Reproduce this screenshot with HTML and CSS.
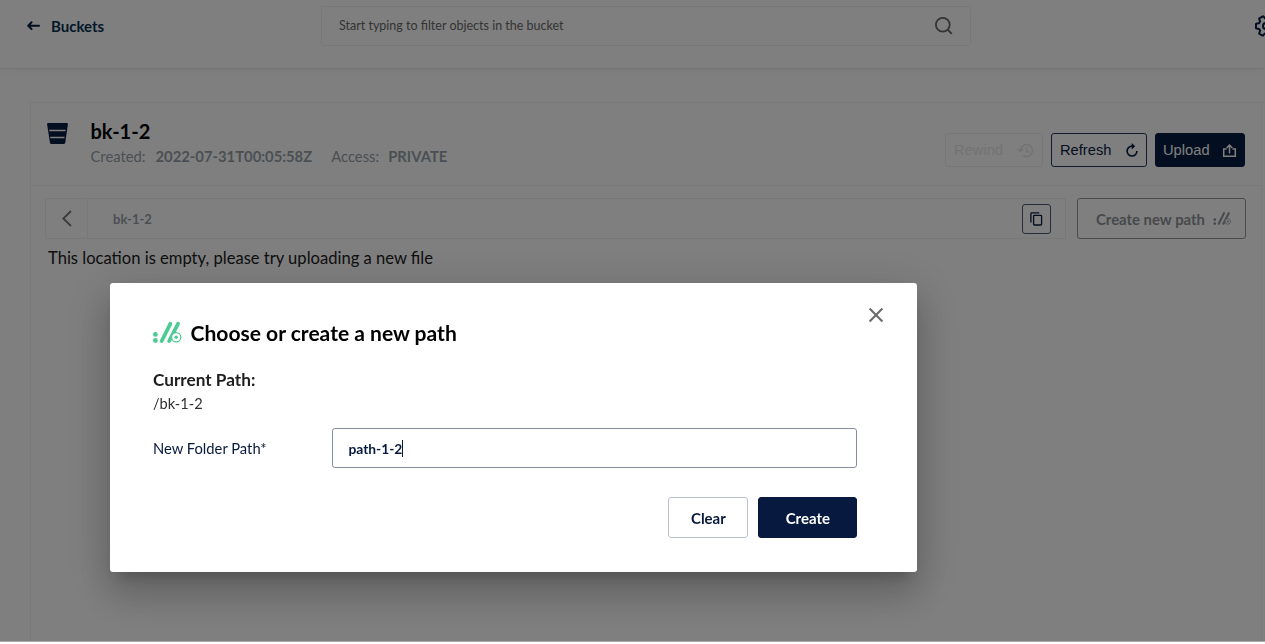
FILE: index.html
```html
<!DOCTYPE html>
<html lang="en">
<head>
<meta charset="utf-8">
<title>Buckets</title>
<link rel="stylesheet" href="styles.css">
</head>
<body>
<div class="app">
  <header class="topbar">
    <a class="back">
      <svg class="back-icon" viewBox="0 0 14 10"><path d="M4.600 1.300 1.200 4.700 4.600 8.100M1.600 4.700H12" fill="none" stroke="currentColor" stroke-width="2" stroke-linecap="round" stroke-linejoin="round"/></svg>
      <span class="back-label">Buckets</span>
    </a>
    <div class="search">
      <span class="search-text">Start typing to filter objects in the bucket</span>
      <svg class="search-icon" viewBox="0 0 18 18"><circle cx="7.8" cy="7.8" r="6.9" fill="none" stroke="currentColor" stroke-width="1.8"/><path d="M12.8 12.8 16.8 16.8" stroke="currentColor" stroke-width="1.9" fill="none"/></svg>
    </div>
    <svg class="gear" viewBox="0 0 24 24"><path d="M19.400 13a7.500 7.500 0 0 0 0-2l2.100-1.700a.6.6 0 0 0 .1-.7l-2-3.400a.6.6 0 0 0-.7-.2l-2.500 1a7.500 7.500 0 0 0-1.700-1l-.4-2.600A.6.6 0 0 0 13.700 2h-3.400a.6.6 0 0 0-.6.400L9.300 5a7.500 7.500 0 0 0-1.700 1l-2.500-1a.6.6 0 0 0-.7.200l-2 3.400a.6.6 0 0 0 .1.700L4.600 11a7.500 7.500 0 0 0 0 2l-2.100 1.700a.6.6 0 0 0-.1.700l2 3.400c.1.200.5.300.7.200l2.500-1a7.500 7.500 0 0 0 1.700 1l.4 2.600c0 .2.300.4.600.4h3.400c.3 0 .5-.2.600-.4l.4-2.600a7.500 7.500 0 0 0 1.700-1l2.500 1c.2.100.6 0 .7-.2l2-3.400a.6.6 0 0 0-.1-.7z" fill="none" stroke="currentColor" stroke-width="2" stroke-linejoin="round" transform="rotate(30 12 12)"/><circle cx="12" cy="12" r="3" fill="none" stroke="currentColor" stroke-width="2"/></svg>
  </header>
  <main class="panel">
    <section class="bucket-head">
      <svg class="bucket-icon" viewBox="0 0 21 21"><path d="M1.200 0H19.800Q21 0 20.900 1.200L18.300 19.500Q18 21 16.700 21H4.400Q3.100 21 2.900 19.500L.1 1.200Q0 0 1.200 0z" fill="currentColor"/><path d="M2.300 7.500H18.600M3.300 14.500H17.500" stroke="#fff" stroke-width="1.300"/></svg>
      <div class="bucket-info">
        <h1 class="bucket-name">bk-1-2</h1>
        <div class="meta"><span class="created">Created:</span><b class="date">2022-07-31T00:05:58Z</b><span class="access">Access:</span><b class="private">PRIVATE</b></div>
      </div>
      <div class="actions">
        <button class="btn rewind">Rewind <svg class="rewind-icon" viewBox="0 0 17 15"><path d="M3.500 7.500a6 6 0 1 1 2.200 4.700M.7 6.200l2.800 2.300 2.600-2.500M9.500 4v4l2.800 1.500" fill="none" stroke="currentColor" stroke-width="1.600"/></svg></button>
        <button class="btn refresh">Refresh <svg class="refresh-icon" viewBox="0 0 12 14"><path d="M6 3.200A4.900 4.900 0 1 0 10.900 8.100" fill="none" stroke="currentColor" stroke-width="1.700"/><path d="M5.700 0 9.200 3.200 5.700 6.400z" fill="currentColor"/></svg></button>
        <button class="btn upload">Upload <svg class="upload-icon" viewBox="0 0 13 13"><path d="M3.500 5H.7V12.300H12.300V5H9.500M6.500 9.500V1.500M3.600 4 6.500 1 9.400 4" fill="none" stroke="currentColor" stroke-width="1.500"/></svg></button>
      </div>
    </section>
    <section class="path-row">
      <div class="crumbs">
        <div class="up"><svg class="up-icon" viewBox="0 0 10 17"><path d="M9 1 1.300 8.500 9 16" fill="none" stroke="currentColor" stroke-width="1.800"/></svg></div>
        <span class="crumb">bk-1-2</span>
        <div class="copy"><svg class="copy-icon" viewBox="0 0 13 14"><rect x="3.600" y="3.400" width="8" height="9.600" rx=".8" fill="none" stroke="currentColor" stroke-width="1.300"/><path d="M.9 10.500V1.600Q.9.900 1.600.9H9.300" fill="none" stroke="currentColor" stroke-width="1.300"/></svg></div>
      </div>
      <button class="new-path"><span>Create new path</span>
        <svg class="new-path-icon" viewBox="0 0 28 21"><g fill="currentColor"><circle cx="2.300" cy="12.400" r="2.200"/><circle cx="2.300" cy="18.600" r="2.200"/></g><path d="M17.300 1.800 8.700 19M25 1.800 16.200 19" stroke="currentColor" stroke-width="3.400" stroke-linecap="round"/><circle cx="23.200" cy="15.200" r="4.500" fill="#fff" stroke="currentColor" stroke-width="1.200"/><circle cx="23.200" cy="15.200" r="1.600" fill="currentColor"/></svg>
      </button>
    </section>
    <p class="empty">This location is empty, please try uploading a new file</p>
  </main>
</div>
<div class="overlay">
  <div class="dialog">
    <svg class="close" viewBox="0 0 14 14"><path d="M.6.6 13.400 13.400M13.400.6.6 13.400" stroke="currentColor" stroke-width="2.100"/></svg>
    <h2 class="title">
      <svg class="title-icon" viewBox="0 0 28 21"><g fill="currentColor"><circle cx="2.400" cy="12.400" r="2.400"/><circle cx="2.400" cy="18.500" r="2.400"/></g><path d="M17.300 1.800 8.700 19M25 1.800 16.200 19" stroke="currentColor" stroke-width="3.800" stroke-linecap="round"/><circle cx="23.200" cy="15.300" r="4.600" fill="#fff" stroke="currentColor" stroke-width="1.200"/><circle cx="23.200" cy="15.300" r="1.700" fill="currentColor"/></svg>
      <span class="title-text">Choose or create a new path</span>
    </h2>
    <div class="current">Current Path:</div>
    <div class="current-value">/bk-1-2</div>
    <div class="field"><span class="label">New Folder Path*</span><div class="input"><span class="value">path-1-2</span><i class="caret"></i></div></div>
    <div class="buttons"><button class="clear">Clear</button><button class="create">Create</button></div>
  </div>
</div>
</body>
</html>
```
FILE: styles.css
```css
* { box-sizing: border-box; }
body { margin: 0; background: #fff; font-family: Lato, sans-serif; color: #000; overflow: hidden; }
button { font: inherit; margin: 0; cursor: pointer; }
svg { display: block; flex: none; overflow: visible; }
.app { height: 642px; overflow: hidden; background: #fff; }
.topbar { height: 69px; display: flex; align-items: flex-start; border-bottom: 1px solid #ebebeb; box-shadow: 0 2px 9px rgba(0,0,0,.05); padding-left: 27px; }
.back { flex: none; width: 294px; height: 52px; display: flex; align-items: center; color: #073052; }
.back-icon { width: 14px; height: 10px; margin-right: 10px; color: #081c42; }
.back-label { font-size: 15px; font-weight: 700; line-height: 20px; }
.search { flex: none; width: 650px; height: 40px; margin-top: 6px; border: 1px solid #f1f1f1; border-radius: 3px; display: flex; align-items: center; justify-content: space-between; padding: 0 17px; color: #686868; }
.search-text { font-size: 12.500px; line-height: 18px; margin-top: -1px; }
.search-icon { width: 18px; height: 18px; }
.gear { width: 24px; height: 24px; margin: 14px 0 0 283px; color: #081c42; }
.panel { margin: 33px 3px 0 30px; height: 560px; border: 1px solid #f3f3f3; }
.bucket-head { height: 83px; display: flex; align-items: flex-start; border-bottom: 1px solid #f3f3f3; padding: 0 16px; }
.bucket-icon { width: 21px; height: 21px; margin-top: 20px; color: #081c42; }
.bucket-info { margin: 15px 0 0 22.500px; flex: 1; }
.bucket-name { margin: 0; font-size: 20px; line-height: 26px; font-weight: 700; }
.meta { display: flex; font-size: 14.800px; line-height: 20px; margin-top: 2px; color: #969fa8; white-space: nowrap; }
.created { width: 56px; }
.date { margin: 0 19px 0 9px; }
.private { margin-left: 9px; }
.actions { display: flex; gap: 8px; margin-top: 30px; }
.btn { height: 34px; border-radius: 3px; border: 1px solid #26365a; background: #fff; color: #081c42; font-family: "Liberation Sans", sans-serif; font-size: 14.700px; display: flex; align-items: center; justify-content: space-between; padding: 0 8px; }
.rewind { width: 98px; color: #e6e6e6; border-color: #efefef; }
.rewind-icon { width: 17px; height: 15px; }
.refresh { width: 96px; }
.refresh-icon { width: 12px; height: 14px; }
.upload { width: 90px; background: #081c42; color: #fff; border-color: #081c42; padding-left: 7px; }
.upload-icon { width: 13px; height: 13px; }
.path-row { display: flex; gap: 11px; padding: 12px 14px 0 14px; }
.crumbs { flex: none; width: 1021px; height: 41px; border: 1px solid #f0f0f0; display: flex; align-items: center; padding-right: 14px; }
.up { width: 42px; height: 39px; display: flex; align-items: center; justify-content: center; border-right: 1px solid #f0f0f0; color: #777; }
.up-icon { width: 10px; height: 17px; }
.crumb { flex: 1; padding-left: 25px; font-size: 13px; font-weight: 700; color: #969fa8; }
.copy { width: 29px; height: 30px; border: 1px solid #4b5875; border-radius: 3px; display: flex; align-items: center; justify-content: center; color: #081c42; }
.copy-icon { width: 13px; height: 14px; }
.new-path { flex: none; width: 169px; height: 41px; padding: 0 14px 0 18px; border: 1px solid #969696; border-radius: 3px; background: #fff; color: #8f9399; display: flex; align-items: center; justify-content: space-between; font-size: 14.900px; font-weight: 700; white-space: nowrap; }
.new-path-icon { width: 18px; height: 13px; }
.empty { margin: 8px 0 0 17px; font-size: 16.570px; line-height: 22px; color: #202020; }
.overlay { position: fixed; left: 0; top: 0; width: 100%; height: 642px; background: rgba(0,0,0,.5); border-bottom: 1px solid #aaa; overflow: hidden; }
.dialog { position: relative; margin: 282.500px 0 0 110px; width: 807.400px; height: 289px; background: #fff; border-radius: 3px; padding: 35.500px 60px 0 43px; box-shadow: 0 11px 15px -7px rgba(0,0,0,.2), 0 24px 38px 3px rgba(0,0,0,.14), 0 9px 46px 8px rgba(0,0,0,.12); }
.close { position: absolute; right: 34.500px; top: 25.500px; width: 14px; height: 14px; color: #6b6b6b; }
.title { margin: 0; height: 30px; display: flex; align-items: center; }
.title-icon { width: 28px; height: 21px; margin: -2px 10.500px 0 -.5px; color: #4ccb92; }
.title-text { font-size: 21.050px; line-height: 30px; margin-left: -.5px; }
.current { margin-top: 21px; font-size: 17.200px; line-height: 22px; font-weight: 700; color: #1e1e1e; }
.current-value { margin-top: 3px; font-size: 14.600px; line-height: 20px; color: #303030; }
.field { display: flex; align-items: center; margin-top: 14px; }
.label { width: 180px; font-size: 14.750px; line-height: 18px; margin-top: -1px; color: #07193e; }
.input { flex: none; width: 525px; height: 40px; border: 1px solid #858ba0; border-radius: 3px; display: flex; align-items: center; padding-left: 15px; color: #07193e; font-size: 13.800px; font-weight: 700; }
.caret { width: 1px; height: 17px; background: #07193e; }
.buttons { display: flex; justify-content: flex-end; gap: 10px; margin-top: 29px; }
.buttons button { height: 41px; border-radius: 3px; font-size: 15px; font-weight: 700; }
.clear { width: 80px; background: #fff; border: 1px solid #bac0cc; color: #07193e; }
.create { width: 99px; background: #07193e; border: 1px solid #07193e; color: #fff; }
```
